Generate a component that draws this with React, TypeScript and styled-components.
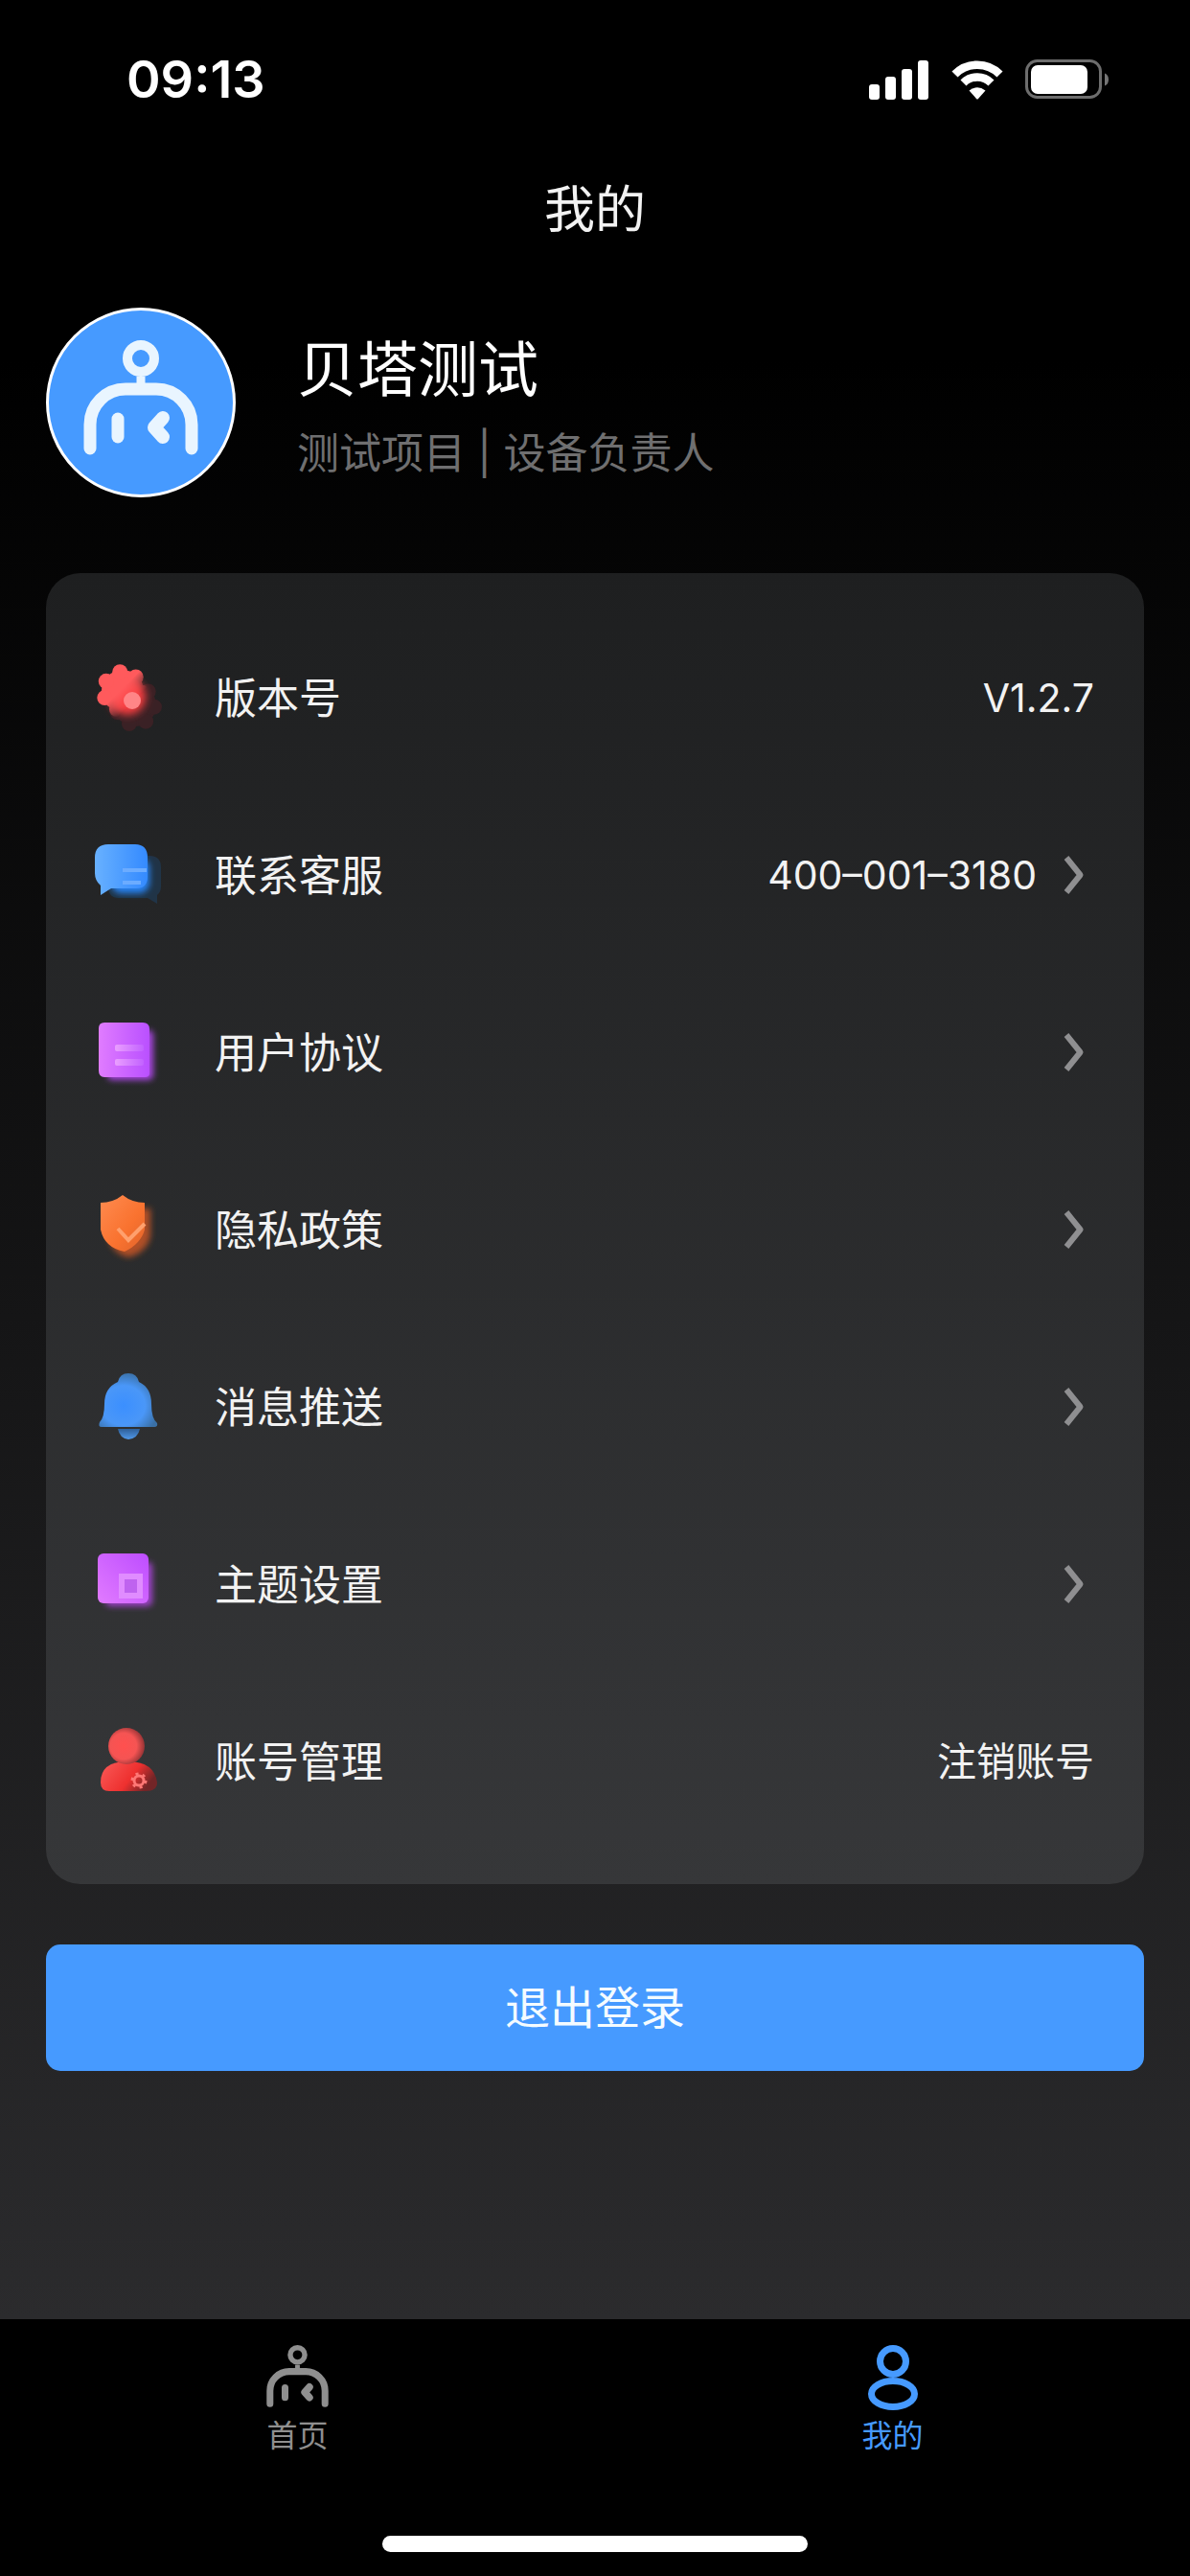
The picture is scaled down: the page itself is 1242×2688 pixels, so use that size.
import React, { ReactNode } from 'react';
import styled, { createGlobalStyle } from 'styled-components';

const latin = `Inter, "Noto Sans CJK SC", sans-serif`;

const GlobalStyle = createGlobalStyle`
  * { box-sizing: border-box; }
  body { margin: 0; background: #000; color: #f2f2f2; font-family: ${latin}; }
  button { font: inherit; color: inherit; border: 0; padding: 0; background: none; cursor: pointer; }
  h1, h2, p, ul { margin: 0; padding: 0; font-weight: inherit; }
  svg { display: block; flex: none; }
`;

const Screen = styled.div`
  min-height: 100vh;
  display: flex;
  flex-direction: column;
  background: linear-gradient(#000 0, #000 14%, #2b2b2d 90%);
`;

const StatusBar = styled.div`
  display: flex;
  justify-content: space-between;
  align-items: center;
  height: 166px;
  padding: 0 84px 0 132px;
`;

const Time = styled.time`
  font-size: 54px;
  line-height: 64px;
  font-weight: 600;
  color: #fff;
`;

const StatusIcons = styled.div`
  display: flex;
  align-items: center;
  gap: 23px;
`;

const Title = styled.h1`
  height: 106px;
  line-height: 106px;
  font-size: 53px;
  text-align: center;
`;

const Content = styled.main`
  flex: 1;
  display: flex;
  flex-direction: column;
  padding: 49px 48px;
`;

const Profile = styled.section`
  display: flex;
  align-items: center;
  gap: 64px;
  margin-bottom: 79px;
`;

const Avatar = styled.div`
  width: 198px;
  height: 198px;
  padding-bottom: 10px;
  border: 3px solid #fff;
  border-radius: 50%;
  background: #469aff;
  color: #e9f5ff;
  display: flex;
  align-items: center;
  justify-content: center;
`;

const ProfileText = styled.div`
  display: flex;
  flex-direction: column;
  gap: 14px;
  padding-top: 8px;
`;

const Name = styled.h2`
  font-size: 63px;
  line-height: 84px;
  color: #fff;
`;

const Role = styled.p`
  font-size: 44px;
  line-height: 64px;
  color: #6f6f70;
`;

const Card = styled.ul`
  list-style: none;
  border-radius: 36px;
  padding: 37px 52px 36px 48px;
  margin-bottom: 63px;
  background: linear-gradient(#1e1f20, #363739);
`;

const Row = styled.button`
  display: flex;
  align-items: center;
  width: 100%;
  height: 185px;
  text-align: left;
`;

const Label = styled.span`
  flex: 1;
  margin-left: 52px;
  padding-top: 2px;
  font-size: 44px;
  line-height: 64px;
`;

const Value = styled.span`
  font-size: 41px;
  line-height: 64px;
`;

const Arrow = styled.svg`
  margin: 0 10px 0 28px;
`;

const Logout = styled.button`
  height: 132px;
  padding-bottom: 8px;
  border-radius: 15px;
  background: #469aff;
  font-size: 47px;
  color: #f4fbff;
`;

const TabBar = styled.nav`
  display: flex;
  padding-top: 27px;
  background: #000;
`;

const Tab = styled.button<{ $active?: boolean }>`
  flex: 1;
  display: flex;
  flex-direction: column;
  align-items: center;
  gap: 3px;
  font-size: 32px;
  line-height: 48px;
  color: ${(p) => (p.$active ? '#469aff' : '#8f8f8f')};
`;

const TabIcon = styled.span`
  height: 68px;
`;

const HomeArea = styled.div`
  display: flex;
  justify-content: center;
  padding: 80px 0 25px;
  background: #000;
`;

const HomeIndicator = styled.div`
  width: 444px;
  height: 17px;
  border-radius: 9px;
  background: #fff;
`;

const Signal = () => (
  <svg width="63" height="41" viewBox="0 0 63 41" fill="#fff">
    <rect x="0" y="25" width="11" height="16" rx="3" />
    <rect x="17" y="17" width="11" height="24" rx="3" />
    <rect x="34" y="9" width="11" height="32" rx="3" />
    <rect x="51" y="0" width="11" height="41" rx="3" />
  </svg>
);

const Wifi = () => (
  <svg width="54" height="41" viewBox="0 0 54 41" fill="none" stroke="#fff">
    <path d="M3.500 14.500A33 33 0 0 1 50.500 14.500" strokeWidth="8.500" />
    <path d="M12.500 23.500A20.500 20.500 0 0 1 41.500 23.500" strokeWidth="8.500" />
    <path d="M18.500 31.500Q27 25 35.500 31.500L28 40Q27 41 26 40Z" fill="#fff" stroke="none" />
  </svg>
);

const Battery = () => (
  <svg width="88" height="42" viewBox="0 0 88 42">
    <rect x="1.500" y="1.500" width="77" height="38" rx="11" fill="none" stroke="#6d6d6d" strokeWidth="3" />
    <rect x="6" y="6" width="59" height="30" rx="7" fill="#fff" />
    <path d="M83 14.500Q87 16 87 21T83 27.500Z" fill="#757575" />
  </svg>
);

const Robot = ({ size }: { size: number }) => (
  <svg width={size} height={size} viewBox="0 0 120 120" fill="none" stroke="currentColor" strokeLinecap="round">
    <circle cx="60" cy="19" r="14" strokeWidth="10" />
    <path d="M60 38V46" strokeWidth="9" strokeLinecap="butt" />
    <path d="M7 113V88A37 37 0 0 1 44 51H76A37 37 0 0 1 113 88V113" strokeWidth="13" />
    <path d="M36 82V101" strokeWidth="13" />
    <path d="M83 81L74 91L83 101" strokeWidth="14" strokeLinejoin="round" />
  </svg>
);

const Person = () => (
  <svg width="54" height="68" viewBox="0 0 54 68" fill="none" stroke="currentColor" strokeWidth="7">
    <circle cx="27" cy="17" r="13.500" />
    <ellipse cx="27" cy="51" rx="22.500" ry="13.500" />
  </svg>
);

const Chevron = () => (
  <Arrow width="22" height="40" viewBox="0 0 22 40" fill="none" stroke="#8f8f91" strokeWidth="6">
    <path d="M3 2L17.500 20L3 38" strokeLinejoin="round" />
  </Arrow>
);

const Glyph = ({ children }: { children: ReactNode }) => (
  <svg width="76" height="76" viewBox="0 0 76 76" aria-hidden="true">{children}</svg>
);

const lobes = [0, 1, 2, 3, 4, 5, 6].map((i) => {
  const angle = ((-98 + (i * 360) / 7) * Math.PI) / 180;
  return { x: Math.cos(angle) * 20, y: Math.sin(angle) * 20 };
});

const Gear = ({ x, y }: { x: number; y: number }) => (
  <g transform={`translate(${x} ${y})`}>
    <circle r="22" />
    {lobes.map((lobe, i) => (
      <circle key={i} cx={lobe.x} cy={lobe.y} r="8" />
    ))}
  </g>
);

const GearIcon = () => (
  <Glyph>
    <defs>
      <linearGradient id="gearFade" gradientUnits="userSpaceOnUse" x1="12" y1="12" x2="48" y2="48">
        <stop offset="0" stopColor="#fff" /><stop offset=".5" stopColor="#fff" /><stop offset=".85" stopColor="#000" />
      </linearGradient>
      <mask id="gearMask"><rect width="76" height="76" fill="url(#gearFade)" /></mask>
      <filter id="gearBlur" x="-40%" y="-40%" width="180%" height="180%"><feGaussianBlur stdDeviation="4" /></filter>
    </defs>
    <g fill="#3a2125"><Gear x={45} y={46} /></g>
    <circle cx="37" cy="37" r="19" fill="#f83c40" filter="url(#gearBlur)" />
    <g fill="#ff5a5c" mask="url(#gearMask)"><Gear x={32} y={31} /></g>
    <circle cx="42" cy="41" r="9" fill="#ff8587" />
  </Glyph>
);

const ChatIcon = () => (
  <Glyph>
    <defs>
      <linearGradient id="chatFill" x1="0" y1="0" x2="1" y2="0">
        <stop offset="0" stopColor="#68b1ff" /><stop offset="1" stopColor="#348aff" />
      </linearGradient>
      <filter id="chatBlur" x="-30%" y="-30%" width="160%" height="160%"><feGaussianBlur stdDeviation="3" /></filter>
    </defs>
    <path d="M26 18H60Q72 18 72 30V50Q72 56 68 59V68L58 62H28Q17 62 17 50V30Z" fill="#1f3a55" opacity=".7" />
    <rect x="20" y="20" width="40" height="37" rx="11" fill="#2882f1" filter="url(#chatBlur)" />
    <path d="M17 6H45Q58 6 58 20V40Q58 52 46 52H20L9 59V49Q3 44 3 36V20Q3 6 17 6Z" fill="url(#chatFill)" />
    <path d="M32 33H57M32 46H51" stroke="#6cacff" strokeWidth="4" />
  </Glyph>
);

const NoteIcon = () => (
  <Glyph>
    <defs>
      <linearGradient id="noteFill" x1="0" y1="0" x2="1" y2="0">
        <stop offset="0" stopColor="#e07cff" /><stop offset="1" stopColor="#b950ff" />
      </linearGradient>
      <linearGradient id="noteLine"><stop stopColor="#ea9fff" /><stop offset="1" stopColor="#c262ff" /></linearGradient>
      <filter id="noteBlur" x="-30%" y="-30%" width="160%" height="160%"><feGaussianBlur stdDeviation="3" /></filter>
    </defs>
    <rect x="16" y="15" width="48" height="52" rx="5" fill="#a745df" filter="url(#noteBlur)" />
    <path d="M13 7H53Q60 7 60 14V60Q60 64 55 64H13Q7 64 7 57V13Q7 7 13 7Z" fill="url(#noteFill)" />
    <rect x="24" y="30" width="30" height="7" rx="2" fill="url(#noteLine)" />
    <rect x="24" y="45" width="30" height="7" rx="2" fill="url(#noteLine)" />
  </Glyph>
);

const ShieldIcon = () => (
  <Glyph>
    <defs>
      <linearGradient id="shieldFill" x1="0" y1="0" x2="1" y2="1">
        <stop offset="0" stopColor="#ff8b50" /><stop offset=".6" stopColor="#f9722f" /><stop offset="1" stopColor="#e0642b" />
      </linearGradient>
      <filter id="shieldBlur" x="-30%" y="-30%" width="160%" height="160%"><feGaussianBlur stdDeviation="3" /></filter>
    </defs>
    <path d="M17 16H61V45Q57 62 38 67Q20 62 17 45Z" fill="#b04f25" filter="url(#shieldBlur)" />
    <path d="M9 10Q22 10 32 2Q42 10 55 10V38Q51 53 34 61Q13 57 9 38Z" fill="url(#shieldFill)" />
    <path d="M27 37L38 49L55 32" fill="none" stroke="#ffa06d" strokeWidth="4" />
  </Glyph>
);

const BellIcon = () => (
  <Glyph>
    <defs>
      <radialGradient id="bellFill" cx=".42" cy=".6" r=".62">
        <stop offset="0" stopColor="#3b8fff" /><stop offset=".6" stopColor="#4a97f8" /><stop offset="1" stopColor="#3a70a6" />
      </radialGradient>
      <linearGradient id="clapper" x2="0" y2="1"><stop stopColor="#2e5f98" /><stop offset="1" stopColor="#5199ea" /></linearGradient>
    </defs>
    <path d="M27 61H50Q48 71 38 72Q29 71 27 61Z" fill="url(#clapper)" />
    <path d="M38 3Q47 3 49 12Q62 18 62 35Q62 50 68 55Q69 59 65 59H10Q6 59 8 54Q13 49 13 35Q13 18 27 12Q29 3 38 3Z" fill="url(#bellFill)" />
  </Glyph>
);

const ThemeIcon = () => (
  <Glyph>
    <defs>
      <linearGradient id="themeFill" x1="0" y1="1" x2="1" y2="0">
        <stop offset="0" stopColor="#e17bff" /><stop offset="1" stopColor="#bd4dff" />
      </linearGradient>
      <filter id="themeBlur" x="-30%" y="-30%" width="160%" height="160%"><feGaussianBlur stdDeviation="3" /></filter>
    </defs>
    <rect x="14" y="15" width="49" height="46" rx="5" fill="#9f43c9" filter="url(#themeBlur)" />
    <rect x="6" y="6" width="53" height="52" rx="6" fill="url(#themeFill)" />
    <rect x="31" y="30" width="19" height="20" fill="#bf63ef" stroke="#e08cff" strokeWidth="6" />
  </Glyph>
);

const AccountIcon = () => (
  <Glyph>
    <defs>
      <radialGradient id="headFill" cx=".42" cy=".5" r=".6">
        <stop offset="0" stopColor="#ff504f" /><stop offset=".6" stopColor="#f55453" /><stop offset="1" stopColor="#8c3032" />
      </radialGradient>
      <linearGradient id="bodyFill" x1="0" y1="0" x2="1" y2=".4">
        <stop offset="0" stopColor="#fa5b59" /><stop offset=".65" stopColor="#ee302f" /><stop offset="1" stopColor="#732527" />
      </linearGradient>
    </defs>
    <path d="M9 60Q9 38 37 38Q65 38 68 60Q68 69 56 69H18Q9 69 9 60Z" fill="url(#bodyFill)" />
    <circle cx="36" cy="22" r="19" fill="url(#headFill)" />
    <circle cx="49" cy="58" r="5" fill="none" stroke="#ff7775" strokeWidth="3" />
    <circle cx="49" cy="58" r="7" fill="none" stroke="#ff7775" strokeWidth="3" strokeDasharray="3 4.330" />
  </Glyph>
);

type Item = { label: string; icon: ReactNode; value?: string; arrow?: boolean };

const items: Item[] = [
  { label: '版本号', icon: <GearIcon />, value: 'V1.2.7' },
  { label: '联系客服', icon: <ChatIcon />, value: '400–001–3180', arrow: true },
  { label: '用户协议', icon: <NoteIcon />, arrow: true },
  { label: '隐私政策', icon: <ShieldIcon />, arrow: true },
  { label: '消息推送', icon: <BellIcon />, arrow: true },
  { label: '主题设置', icon: <ThemeIcon />, arrow: true },
  { label: '账号管理', icon: <AccountIcon />, value: '注销账号' },
];

export default function App() {
  return (
    <>
      <GlobalStyle />
      <Screen>
        <StatusBar>
          <Time>09:13</Time>
          <StatusIcons>
            <Signal />
            <Wifi />
            <Battery />
          </StatusIcons>
        </StatusBar>
        <Title>我的</Title>
        <Content>
          <Profile>
            <Avatar>
              <Robot size={120} />
            </Avatar>
            <ProfileText>
              <Name>贝塔测试</Name>
              <Role>测试项目 | 设备负责人</Role>
            </ProfileText>
          </Profile>
          <Card>
            {items.map((item) => (
              <li key={item.label}>
                <Row type="button">
                  {item.icon}
                  <Label>{item.label}</Label>
                  {item.value && <Value>{item.value}</Value>}
                  {item.arrow && <Chevron />}
                </Row>
              </li>
            ))}
          </Card>
          <Logout type="button">退出登录</Logout>
        </Content>
        <TabBar>
          <Tab type="button">
            <TabIcon>
              <Robot size={65} />
            </TabIcon>
            首页
          </Tab>
          <Tab type="button" $active>
            <TabIcon>
              <Person />
            </TabIcon>
            我的
          </Tab>
        </TabBar>
        <HomeArea>
          <HomeIndicator />
        </HomeArea>
      </Screen>
    </>
  );
}
